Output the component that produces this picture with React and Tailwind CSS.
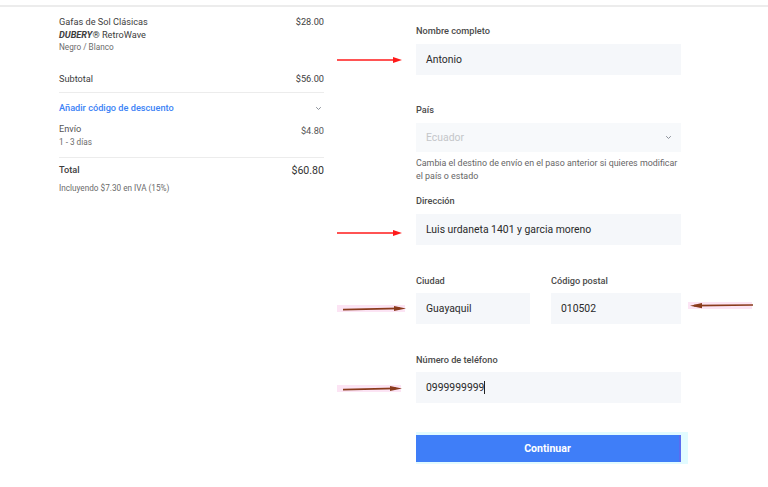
import React from "react";

function Chevron({ className }) {
  return (
    <svg className={className} width="7" height="5" viewBox="0 0 7 5" fill="none">
      <path d="M1.2 1.2 L3.5 3.5 L5.8 1.2" stroke="#8a8f98" strokeWidth="1" />
    </svg>
  );
}

function RedArrow({ left, top, width }) {
  return (
    <svg className="absolute" style={{ left, top }} width={width} height="8" viewBox={`0 0 ${width} 8`}>
      <line x1="0" y1="4" x2={width - 7} y2="4" stroke="#ff1a1a" strokeWidth="1.6" />
      <polygon points={`${width - 9},1 ${width},4 ${width - 9},7`} fill="#ff1a1a" />
    </svg>
  );
}

function BrownArrow({ left, top, width, dir = "right", bandLeft, bandWidth }) {
  return (
    <div className="absolute" style={{ left, top, width, height: 10 }}>
      <div className="absolute bg-[#fce4f4]" style={{ left: bandLeft, top: 1, width: bandWidth, height: 7 }} />
      <svg className="absolute left-0 top-0" width={width} height="10" viewBox={`0 0 ${width} 10`}>
        {dir === "right" ? (
          <>
            <line x1="6" y1="5.6" x2={width - 6} y2="4.4" stroke="#8a3b1c" strokeWidth="1.6" />
            <polygon points={`${width - 12},2 ${width},4.4 ${width - 12},7`} fill="#8a3b1c" />
          </>
        ) : (
          <>
            <line x1="6" y1="4.6" x2={width - 2} y2="4" stroke="#8a3b1c" strokeWidth="1.6" />
            <polygon points={`14,2 2,4.8 14,7.2`} fill="#8a3b1c" />
          </>
        )}
      </svg>
    </div>
  );
}

function Label({ children, className = "" }) {
  return (
    <div className={"h-[14px] leading-[14px] text-[9.2px] text-[#4a4a4a] font-medium " + className}>{children}</div>
  );
}

function Field({ value, className = "", caret }) {
  return (
    <div className={"h-[31px] bg-[#f5f7fa] flex items-center pl-[10px] text-[10.4px] text-[#2a2a2a] " + className}>
      <span>{value}</span>
      {caret && <span className="inline-block w-px h-[13px] bg-[#222]" />}
    </div>
  );
}

export default function App() {
  return (
    <div
      className="relative w-[768px] h-[487px] bg-white overflow-hidden"
      style={{ fontFamily: "Roboto, 'Liberation Sans', sans-serif" }}
    >
      <div className="h-[2px] mt-[5px] bg-[#ececec]" />
      <div className="flex pl-[59px] gap-[92px]">
        {/* Left summary */}
        <div className="w-[265px] text-[#3d3d3d]">
          <div className="mt-[8px] flex justify-between text-[9.2px]">
            <div>
              <div className="h-[13px] leading-[13px]">Gafas de Sol Clásicas</div>
              <div className="h-[13px] leading-[13px]">
                <span className="font-bold italic">DUBERY</span>® RetroWave
              </div>
              <div className="h-[13px] leading-[13px] text-[8.2px] text-[#6b6b6b]">Negro / Blanco</div>
            </div>
            <div className="h-[13px] leading-[13px]">$28.00</div>
          </div>
          <div className="mt-[18px] h-[14px] leading-[14px] flex justify-between text-[9.2px]">
            <span>Subtotal</span>
            <span>$56.00</span>
          </div>
          <div className="mt-[6px] h-px bg-[#ececec]" />
          <div className="mt-[8px] h-[14px] flex justify-between items-center">
            <span className="text-[9.2px] font-medium text-[#3b82f6] leading-[14px]">Añadir código de descuento</span>
            <Chevron className="mr-[2px]" />
          </div>
          <div className="mt-[7px] flex justify-between">
            <div>
              <div className="h-[14px] leading-[14px] text-[9.2px] text-[#555]">Envío</div>
              <div className="h-[12px] leading-[12px] text-[8.2px] text-[#6b6b6b]">1 - 3 días</div>
            </div>
            <div className="mt-[2px] h-[14px] leading-[14px] text-[9.2px] text-[#555]">$4.80</div>
          </div>
          <div className="mt-[9px] h-px bg-[#ececec]" />
          <div className="mt-[5px] h-[14px] flex justify-between items-center">
            <span className="text-[9.2px] font-medium text-[#3d3d3d]">Total</span>
            <span className="text-[10.6px] text-[#333] mt-[2px]">$60.80</span>
          </div>
          <div className="mt-[5px] h-[12px] leading-[12px] text-[8.2px] text-[#6b6b6b]">
            Incluyendo $7.30 en IVA (15%)
          </div>
        </div>

        {/* Right form */}
        <div className="w-[265px]">
          <Label className="mt-[17px]">Nombre completo</Label>
          <Field value="Antonio" className="mt-[6px]" />

          <Label className="mt-[28px]">País</Label>
          <div className="mt-[6px] h-[29px] bg-[#f7f9fb] flex items-center justify-between pl-[10px] pr-[9px]">
            <span className="text-[10.4px] text-[#c4c6c9]">Ecuador</span>
            <Chevron />
          </div>
          <div className="mt-[5px] text-[8.9px] leading-[13px] text-[#666]">
            Cambia el destino de envío en el paso anterior si quieres modificar el país o estado
          </div>

          <Label className="mt-[11px]">Dirección</Label>
          <Field value="Luis urdaneta 1401 y garcia moreno" className="mt-[6px]" />

          <div className="mt-[29px] flex gap-[21px]">
            <div className="w-[114px]">
              <Label>Ciudad</Label>
              <Field value="Guayaquil" className="mt-[5px]" />
            </div>
            <div className="w-[130px]">
              <Label>Código postal</Label>
              <Field value="010502" className="mt-[5px]" />
            </div>
          </div>

          <Label className="mt-[29px]">Número de teléfono</Label>
          <Field value="0999999999" className="mt-[5px]" caret />

          <div className="mt-[29px] w-[272px] bg-[#e2fbff] pt-[3px] pr-[6px] pb-[2px]">
            <button className="w-[265px] h-[27px] bg-[#3f7ef8] border-r-2 border-[#5a6cf0] text-white text-[10.6px] font-bold">
              Continuar
            </button>
          </div>
        </div>
      </div>

      {/* Annotation arrows */}
      <RedArrow left={337} top={56} width={65} />
      <RedArrow left={337} top={229} width={65} />
      <BrownArrow left={337} top={304} width={69} bandLeft={0} bandWidth={68} />
      <BrownArrow left={688} top={301} width={67} dir="left" bandLeft={0} bandWidth={64} />
      <BrownArrow left={337} top={384} width={65} bandLeft={0} bandWidth={64} />
    </div>
  );
}
